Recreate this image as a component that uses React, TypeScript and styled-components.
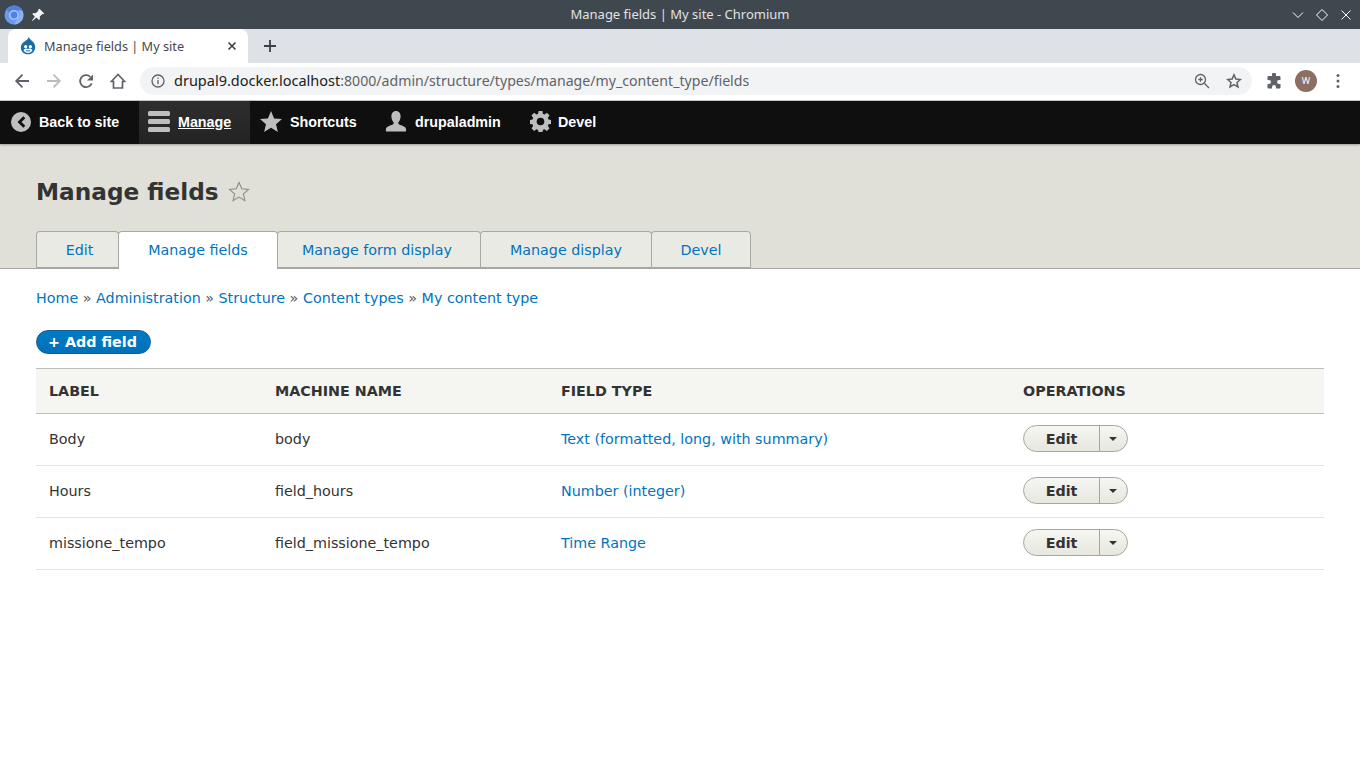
import React from "react";
import styled, { createGlobalStyle } from "styled-components";

const Global = createGlobalStyle`
  html, body { margin: 0; padding: 0; background: #fff; }
  body { font-family: "DejaVu Sans", sans-serif; width: 1360px; height: 768px; overflow: hidden; }
  a { text-decoration: none; }
`;

const TitleBar = styled.div`
  height: 29px; background: #3f474f; display: flex; align-items: center; position: relative;
  padding: 0 6px 0 4px; box-sizing: border-box; gap: 7px;
`;
const WindowTitle = styled.div`
  position: absolute; left: 0; right: 0; top: 0; height: 29px; text-align: center;
  font: 13px/29px "Noto Sans", sans-serif; color: #e0e2e4;
`;
const TitleIcon = styled.span`position: relative; display: flex;`;
const WindowControls = styled.div`
  margin-left: auto; display: flex; gap: 8px; position: relative; align-items: center;
`;
const TabStrip = styled.div`
  height: 34px; background: #dee1e6; display: flex; align-items: flex-end; padding-left: 8px;
`;
const BrowserTab = styled.div`
  width: 240px; height: 34px; background: #fff; border-radius: 8px 8px 0 0; display: flex; align-items: center;
  padding: 0 11px 0 12px; box-sizing: border-box; gap: 8px;
  font: 12.73px "Noto Sans", sans-serif; color: #45494e;
`;
const TabName = styled.span`flex: 1;`;
const NewTab = styled.div`
  width: 34px; height: 34px; margin-left: 5px; display: flex; align-items: center; justify-content: center;
`;
const UrlRow = styled.div`
  height: 36px; background: #fff; border-bottom: 1px solid #c5c7ca; display: flex; align-items: center; padding: 0 0 1px 14px;
  box-sizing: content-box;
`;
const NavIcons = styled.div`display: flex; gap: 16px; align-items: center; margin-right: 14px;`;
const Omnibox = styled.div`
  width: 1112px; height: 28px; border-radius: 14px; background: #f1f3f4; display: flex; align-items: center;
  padding: 0 10px 0 11px; box-sizing: border-box; font: 14.14px "Noto Sans", sans-serif; color: #5f6368;
`;
const UrlText = styled.span`margin: 0 0 2px 9px; white-space: pre;`;
const Host = styled.span`color: #202124; font-size: 14.5px;`;
const OmniEnd = styled.div`margin-left: auto; display: flex; align-items: center; gap: 16px;`;
const ExtArea = styled.div`display: flex; align-items: center; margin-left: 14px; gap: 13px;`;
const Avatar = styled.div`
  width: 22px; height: 22px; border-radius: 50%; background: #8d6e63; color: #fff; text-align: center;
  font: 9px/22px "Noto Sans", sans-serif; margin-right: 2px;
`;

const Toolbar = styled.nav`
  height: 43px; background: #0f0f0f; display: flex; align-items: stretch;
  box-shadow: 0 1px 2px rgba(0,0,0,.3); position: relative;
  font: bold 14.3px "Liberation Sans", sans-serif; color: #fff;
`;
const ToolItem = styled.a<{ $active?: boolean; $w: number; $pad: number; $gap: number }>`
  width: ${p => p.$w}px; display: flex; align-items: center; color: #fff; box-sizing: border-box;
  padding: 0 0 2px ${p => p.$pad}px; gap: ${p => p.$gap}px;
  background: ${p => (p.$active ? "linear-gradient(#2e2e2e, #232323)" : "none")};
  text-decoration: ${p => (p.$active ? "underline" : "none")};
`;

const Header = styled.header`
  height: 125px; background: #e0e0d8; border-bottom: 1px solid #a6a6a6; box-sizing: border-box; padding: 0 36px;
  display: flex; flex-direction: column;
`;
const TitleRow = styled.div`
  display: flex; align-items: center; gap: 9px; height: 30px; margin-top: 33px;
`;
const Title = styled.h1`
  margin: 0; font: bold 23.2px/30px "DejaVu Sans", sans-serif; color: #333;
`;
const Tabs = styled.div`display: flex; margin-top: 24px; align-items: flex-start;`;
const Tab = styled.a<{ $active?: boolean; $w: number; $left?: number; $right?: number }>`
  width: ${p => p.$w}px; height: ${p => (p.$active ? 38 : 37)}px; box-sizing: border-box;
  background: ${p => (p.$active ? "#fff" : "#eaeae5")}; border: 1px solid #a9a9a3; margin-left: -1px;
  border-bottom: ${p => (p.$active ? "none" : "1px solid #a6a6a6")};
  border-radius: 4px 4px 0 0; text-align: center; color: #0074bd;
  padding: 0 ${p => p.$right ?? 0}px 0 ${p => p.$left ?? 0}px;
  font: 14.3px/37px "DejaVu Sans", sans-serif; position: relative; z-index: ${p => (p.$active ? 1 : 0)};
  &:first-child { margin-left: 0; }
`;

const Main = styled.main`padding: 0 36px; font: 14.3px "DejaVu Sans", sans-serif; color: #333;`;
const Crumbs = styled.div`margin-top: 21px; height: 17px; line-height: 17px; color: #555; white-space: pre;`;
const Link = styled.a`color: #0074bd;`;
const AddButton = styled.a`
  display: block; width: 115px; height: 24px; margin-top: 23px; box-sizing: border-box; border-radius: 20px;
  background: linear-gradient(#007bc6, #0071b8); border: 1px solid #1e5c90; color: #fff;
  font: bold 14.3px/22px "DejaVu Sans", sans-serif; text-align: center; padding-right: 2px;
`;
const Table = styled.div`margin-top: 14px; width: 1288px;`;
const Row = styled.div`
  display: grid; grid-template-columns: 226px 286px 462px 1fr; align-items: center; height: 52px;
  box-sizing: border-box; border-bottom: 1px solid #e6e4df; padding-bottom: 2px;
`;
const HeadRow = styled(Row)`
  height: 46px; background: #f5f5f2; border-top: 1px solid #bfbfba; border-bottom: 1px solid #bfbfba;
  padding-bottom: 0; font-weight: bold; font-size: 14.3px; color: #333; text-transform: uppercase;
`;
const Cell = styled.div`padding-left: 13px;`;
const OpGroup = styled.div`
  display: flex; width: 105px; height: 27px; box-sizing: border-box; border: 1px solid #a6a6a0; border-radius: 14px;
  background: linear-gradient(#f6f6f3, #e7e7df); overflow: hidden;
`;
const OpEdit = styled.a`
  width: 75px; text-align: center; font: bold 14.3px/26px "DejaVu Sans", sans-serif; color: #333; border-right: 1px solid #a6a6a0;
`;
const OpToggle = styled.div`
  flex: 1; display: flex; align-items: center; justify-content: center; padding-right: 2px;
  &::after { content: ""; border-style: solid; border-color: #333 transparent transparent; border-width: 4px 4px 0; }
`;

const Chromium = () => (
  <svg width="20" height="20" viewBox="0 0 20 20">
    <circle cx="10" cy="10" r="9.500" fill="#6b9bec"/>
    <path d="M10 .5a9.500 9.500 0 0 1 8.300 4.900H10a4.700 4.700 0 0 0-4.300 2.800L2.600 4A9.500 9.500 0 0 1 10 .5z" fill="#4f7fd8"/>
    <path d="M18.300 5.400A9.500 9.500 0 0 1 10 19.500l3.800-6.700a4.700 4.700 0 0 0 .4-7.400z" fill="#8ab0f2"/>
    <circle cx="10" cy="10" r="5" fill="#a9c4f4"/>
    <circle cx="10" cy="10" r="3.400" fill="#4b82e8"/>
  </svg>
);
const Pin = () => (
  <svg width="14" height="14" viewBox="0 0 14 14" fill="#f4f4f4"><path d="M8.500.8l4.700 4.700-.9.800-1-.2-2.600 2.600.3 2.400-1 1-2.500-2.500L1.400 13l-.4-.4 2.900-4-2.600-2.600 1-1 2.400.3 2.600-2.600-.2-1z"/></svg>
);
const Drop = () => (
  <svg width="16" height="18" viewBox="0 0 16 18">
    <path d="M8.800 0c.6 2.400 3 3.400 4.600 5.300 2.500 2.900 2.400 7.300-.2 10-2.700 2.700-7.700 2.700-10.400 0C.2 12.600.2 8.300 2.900 5.700 5 3.800 7.900 3 8.800 0z" fill="#1a6ca6"/>
    <circle cx="5.700" cy="9.700" r="1.600" fill="#fff"/>
    <circle cx="10.400" cy="9.700" r="1.600" fill="#fff"/>
    <path d="M3.500 13.200c1.200-1.700 3-2.200 4.600-1.100 1.500-1.100 3.300-.6 4.400 1.100-1 1.700-2.700 2.700-4.500 2.700s-3.500-1-4.500-2.700z" fill="#fff"/>
    <path d="M6 13.800h4.200" stroke="#1a6ca6" strokeWidth="1"/>
  </svg>
);
const Back = () => (
  <svg width="16" height="16" viewBox="0 0 16 16" fill="none" stroke="#5f6368" strokeWidth="1.800"><path d="M15 8H2.500M8.500 1.700L2.200 8l6.300 6.300"/></svg>
);
const Forward = () => (
  <svg width="16" height="16" viewBox="0 0 16 16" fill="none" stroke="#babcbe" strokeWidth="1.800"><path d="M1 8h12.500M7.500 1.700L13.800 8l-6.300 6.300"/></svg>
);
const Reload = () => (
  <svg width="16" height="16" viewBox="0 0 16 16" fill="none"><path d="M13.700 10.300A6 6 0 1 1 12.300 3.800" stroke="#5f6368" strokeWidth="1.800"/><path d="M15 1.400v6h-6z" fill="#5f6368"/></svg>
);
const Home = () => (
  <svg width="16" height="16" viewBox="0 0 16 16" fill="none" stroke="#5f6368" strokeWidth="1.700"><path d="M3.500 15V8.500H1.300L8 1.400l6.700 7.100h-2.200V15z"/></svg>
);

const ToolBack = () => (
  <svg width="20" height="20" viewBox="0 0 20 20"><circle cx="10" cy="10" r="10" fill="#bebebe"/><path d="M12.300 4.300l2 2-3.800 3.700 3.800 3.700-2 2L6.500 10z" fill="#111"/></svg>
);
const ToolMenu = () => (
  <svg width="24" height="21" viewBox="0 0 24 21" fill="#bebebe"><rect width="22" height="5" rx="1.500"/><rect y="8" width="22" height="5" rx="1.500"/><rect y="16" width="22" height="5" rx="1.500"/></svg>
);
const ToolStar = () => (
  <svg width="22" height="22" viewBox="0 0 22 22" fill="#bebebe"><path d="M11 0l3.100 7.400 7.900.6-6 5.200 1.900 7.800L11 16.800 4.100 21 6 13.200 0 8l7.900-.6z"/></svg>
);
const ToolUser = () => (
  <svg width="22" height="22" viewBox="0 0 22 22" fill="#bebebe"><path d="M11 0c3 0 4.600 2.300 4.600 5.500 0 2.500-1 4.600-2.100 5.700-.5.800-.2 1.800.8 2.300 2.400 1.100 6.300 2.200 6.700 4.200.2 1.100 0 2.800 0 2.800H1s-.2-1.700 0-2.800c.4-2 4.300-3.100 6.700-4.200 1-.5 1.300-1.500.8-2.300C7.400 10.100 6.400 8 6.400 5.500 6.400 2.300 8 0 11 0z"/></svg>
);
const ToolGear = () => (
  <svg width="21" height="21" viewBox="0 0 22 22" fill="#bebebe"><path fillRule="evenodd" d="M9 0h4l.5 3 1.700.7 2.500-1.800 2.800 2.800-1.800 2.500.7 1.800 3 .5v4l-3 .5-.7 1.700 1.800 2.500-2.800 2.800-2.500-1.800-1.700.7-.5 3H9l-.5-3-1.700-.7-2.500 1.800-2.800-2.800 1.800-2.500-.7-1.700-3-.5v-4l3-.5.7-1.800-1.800-2.500 2.800-2.800 2.500 1.800L8.500 3zM11 7a4 4 0 1 0 0 8 4 4 0 0 0 0-8z"/></svg>
);
const FavStar = () => (
  <svg width="22" height="22" viewBox="0 0 22 22" fill="none" stroke="#8c8c80" strokeWidth="1.100"><path d="M11 1.500l2.800 6.300 6.700.6-5.100 4.500 1.500 6.700L11 16.100l-5.900 3.500 1.500-6.700L1.500 8.400l6.700-.6z"/></svg>
);

const rows = [
  ["Body", "body", "Text (formatted, long, with summary)"],
  ["Hours", "field_hours", "Number (integer)"],
  ["missione_tempo", "field_missione_tempo", "Time Range"],
];

export default function App() {
  return (
    <>
      <Global />
      <TitleBar>
        <WindowTitle>Manage fields | My site - Chromium</WindowTitle>
        <TitleIcon><Chromium /></TitleIcon>
        <TitleIcon><Pin /></TitleIcon>
        <WindowControls>
          <svg width="16" height="16" viewBox="0 0 16 16" fill="none" stroke="#fff"><path d="M3 5.500L8 10.500l5-5"/></svg>
          <svg width="16" height="16" viewBox="0 0 16 16" fill="none" stroke="#fff"><path d="M8 2.500L13.500 8 8 13.500 2.500 8z"/></svg>
          <svg width="16" height="16" viewBox="0 0 16 16" fill="none" stroke="#fff"><path d="M3.500 3.500l9 9M12.500 3.500l-9 9"/></svg>
        </WindowControls>
      </TitleBar>
      <TabStrip>
        <BrowserTab>
          <Drop />
          <TabName>Manage fields | My site</TabName>
          <svg width="10" height="10" viewBox="0 0 10 10" stroke="#3c4043" strokeWidth="1.600"><path d="M1.500 1.500l7 7M8.500 1.500l-7 7"/></svg>
        </BrowserTab>
        <NewTab>
          <svg width="12" height="12" viewBox="0 0 12 12" stroke="#3c4043" strokeWidth="1.800"><path d="M6 0v12M0 6h12"/></svg>
        </NewTab>
      </TabStrip>
      <UrlRow>
        <NavIcons><Back /><Forward /><Reload /><Home /></NavIcons>
        <Omnibox>
          <svg width="14" height="14" viewBox="0 0 14 14" fill="none" stroke="#5f6368" strokeWidth="1.300"><circle cx="7" cy="7" r="6"/><path d="M7 6v4.300M7 3.400v1.300"/></svg>
          <UrlText><Host>drupal9.docker.localhost</Host>:8000/admin/structure/types/manage/my_content_type/fields</UrlText>
          <OmniEnd>
            <svg width="16" height="16" viewBox="0 0 16 16" fill="none" stroke="#5f6368" strokeWidth="1.300"><circle cx="6.500" cy="6.500" r="5"/><path d="M10.300 10.300L15 15M4.300 6.500h4.400M6.500 4.300v4.400"/></svg>
            <svg width="16" height="16" viewBox="0 0 16 16" fill="none" stroke="#5f6368" strokeWidth="1.500"><path d="M8 1.800l1.900 4.200 4.500.5-3.400 3 1 4.500L8 11.700 4 14l1-4.500-3.400-3 4.500-.5z"/></svg>
          </OmniEnd>
        </Omnibox>
        <ExtArea>
          <svg width="16" height="16" viewBox="0 0 16 16" fill="#5f6368"><path d="M6 1.500a2 2 0 0 1 4 0V3h3.500a1 1 0 0 1 1 1v3H13a2 2 0 0 0 0 4h1.500v3.500a1 1 0 0 1-1 1H10V14a2 2 0 0 0-4 0v1.500H2.500a1 1 0 0 1-1-1V11H3a2 2 0 0 0 0-4H1.500V4a1 1 0 0 1 1-1H6z"/></svg>
          <Avatar>W</Avatar>
          <svg width="12" height="16" viewBox="0 0 12 16" fill="#5f6368"><circle cx="6" cy="2.500" r="1.500"/><circle cx="6" cy="8" r="1.500"/><circle cx="6" cy="13.500" r="1.500"/></svg>
        </ExtArea>
      </UrlRow>
      <Toolbar>
        <ToolItem $w={139} $pad={11} $gap={8}><ToolBack />Back to site</ToolItem>
        <ToolItem $w={111} $pad={9} $gap={6} $active><ToolMenu />Manage</ToolItem>
        <ToolItem $w={124} $pad={10} $gap={8}><ToolStar />Shortcuts</ToolItem>
        <ToolItem $w={146} $pad={11} $gap={8}><ToolUser />drupaladmin</ToolItem>
        <ToolItem $w={100} $pad={10} $gap={7}><ToolGear />Devel</ToolItem>
      </Toolbar>
      <Header>
        <TitleRow><Title>Manage fields</Title><FavStar /></TitleRow>
        <Tabs>
          <Tab $w={83} $left={4}>Edit</Tab>
          <Tab $w={160} $active>Manage fields</Tab>
          <Tab $w={204} $right={4}>Manage form display</Tab>
          <Tab $w={172}>Manage display</Tab>
          <Tab $w={100}>Devel</Tab>
        </Tabs>
      </Header>
      <Main>
        <Crumbs>
          <Link>Home</Link> » <Link>Administration</Link> » <Link>Structure</Link> » <Link>Content types</Link> » <Link>My content type</Link>
        </Crumbs>
        <AddButton>+ Add field</AddButton>
        <Table>
          <HeadRow>
            <Cell>Label</Cell><Cell>Machine name</Cell><Cell>Field type</Cell><Cell>Operations</Cell>
          </HeadRow>
          {rows.map(r => (
            <Row key={r[0]}>
              <Cell>{r[0]}</Cell>
              <Cell>{r[1]}</Cell>
              <Cell><Link>{r[2]}</Link></Cell>
              <Cell><OpGroup><OpEdit>Edit</OpEdit><OpToggle /></OpGroup></Cell>
            </Row>
          ))}
        </Table>
      </Main>
    </>
  );
}
